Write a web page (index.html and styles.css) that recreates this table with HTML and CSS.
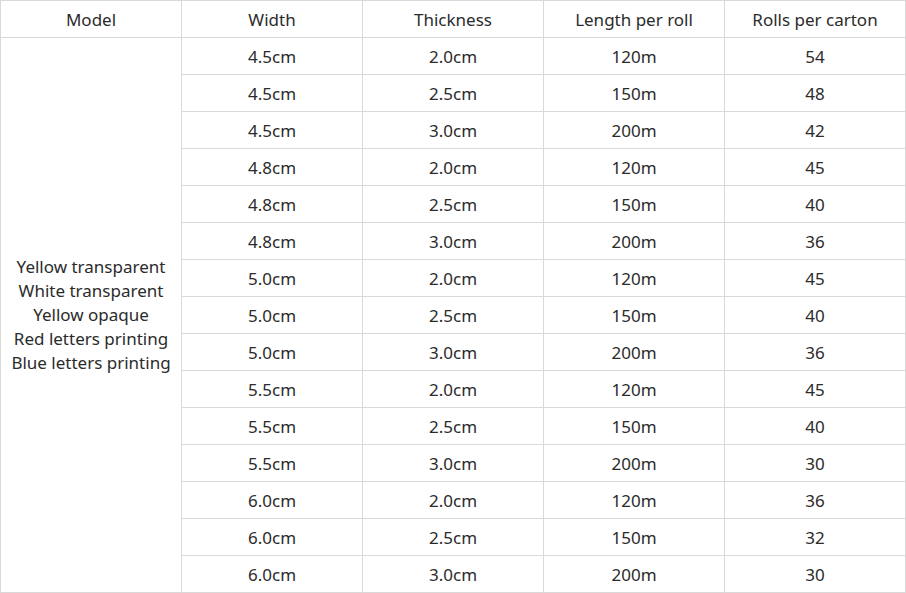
FILE: index.html
```html
<!DOCTYPE html>
<html>
<head>
<meta charset="utf-8">
<link rel="stylesheet" href="styles.css">
</head>
<body>
<table class="spec">
  <colgroup><col class="c"><col class="c"><col class="c"><col class="c"><col class="c"></colgroup>
  <thead>
    <tr><th>Model</th><th>Width</th><th>Thickness</th><th>Length per roll</th><th>Rolls per carton</th></tr>
  </thead>
  <tbody>
    <tr><td rowspan="15" class="model">Yellow transparent<br>White transparent<br>Yellow opaque<br>Red letters printing<br>Blue letters printing</td><td>4.5cm</td><td>2.0cm</td><td>120m</td><td>54</td></tr>
    <tr><td>4.5cm</td><td>2.5cm</td><td>150m</td><td>48</td></tr>
    <tr><td>4.5cm</td><td>3.0cm</td><td>200m</td><td>42</td></tr>
    <tr><td>4.8cm</td><td>2.0cm</td><td>120m</td><td>45</td></tr>
    <tr><td>4.8cm</td><td>2.5cm</td><td>150m</td><td>40</td></tr>
    <tr><td>4.8cm</td><td>3.0cm</td><td>200m</td><td>36</td></tr>
    <tr><td>5.0cm</td><td>2.0cm</td><td>120m</td><td>45</td></tr>
    <tr><td>5.0cm</td><td>2.5cm</td><td>150m</td><td>40</td></tr>
    <tr><td>5.0cm</td><td>3.0cm</td><td>200m</td><td>36</td></tr>
    <tr><td>5.5cm</td><td>2.0cm</td><td>120m</td><td>45</td></tr>
    <tr><td>5.5cm</td><td>2.5cm</td><td>150m</td><td>40</td></tr>
    <tr><td>5.5cm</td><td>3.0cm</td><td>200m</td><td>30</td></tr>
    <tr><td>6.0cm</td><td>2.0cm</td><td>120m</td><td>36</td></tr>
    <tr><td>6.0cm</td><td>2.5cm</td><td>150m</td><td>32</td></tr>
    <tr><td>6.0cm</td><td>3.0cm</td><td>200m</td><td>30</td></tr>
  </tbody>
</table>
</body>
</html>
```
FILE: styles.css
```css
html, body {
  margin: 0;
  padding: 0;
  background: #fff;
}
.spec {
  border-collapse: collapse;
  table-layout: fixed;
  width: 906px;
  font-family: "Noto Sans", "Open Sans", sans-serif;
  font-size: 17px;
  color: #2b2b2b;
}
.spec .c { width: 181px; }
.spec th, .spec td {
  border: 1px solid #d9d9d9;
  height: 37px;
  padding: 2px 0 0 0;
  text-align: center;
  vertical-align: middle;
  font-weight: normal;
  line-height: 24px;
  box-sizing: border-box;
}
.spec td.model {
  line-height: 24px;
  padding-top: 0;
}
```
